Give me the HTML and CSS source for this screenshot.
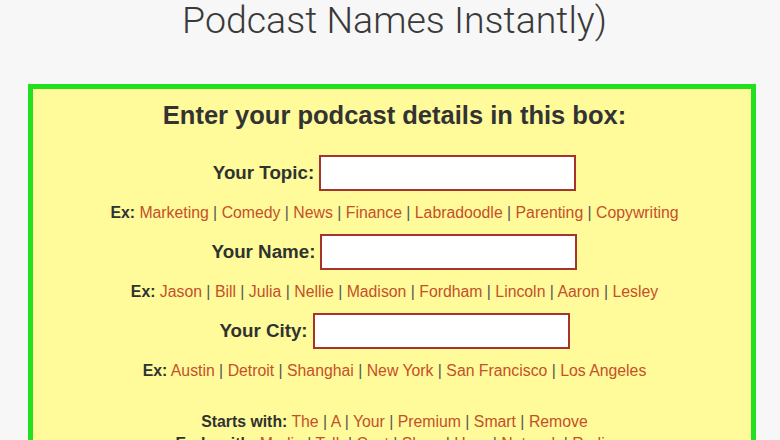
FILE: index.html
```html
<!DOCTYPE html>
<html lang="en">
<head>
  <meta charset="UTF-8">
  <meta name="viewport" content="width=device-width, initial-scale=1.0">
  <title>Podcast Name Generator</title>
  <link rel="stylesheet" href="styles.css">
</head>
<body>
  <h1 class="title">Podcast Names Instantly)</h1>

  <div class="box">
    <h2 class="box-heading">Enter your podcast details in this box:</h2>

    <div class="field">
      <label for="topic">Your Topic:</label>
      <input type="text" id="topic" class="input-field">
    </div>
    <p class="examples"><b>Ex:</b> <a href="#">Marketing</a> | <a href="#">Comedy</a> | <a href="#">News</a> | <a href="#">Finance</a> | <a href="#">Labradoodle</a> | <a href="#">Parenting</a> | <a href="#">Copywriting</a></p>

    <div class="field">
      <label for="name">Your Name:</label>
      <input type="text" id="name" class="input-field">
    </div>
    <p class="examples"><b>Ex:</b> <a href="#">Jason</a> | <a href="#">Bill</a> | <a href="#">Julia</a> | <a href="#">Nellie</a> | <a href="#">Madison</a> | <a href="#">Fordham</a> | <a href="#">Lincoln</a> | <a href="#">Aaron</a> | <a href="#">Lesley</a></p>

    <div class="field">
      <label for="city">Your City:</label>
      <input type="text" id="city" class="input-field">
    </div>
    <p class="examples"><b>Ex:</b> <a href="#">Austin</a> | <a href="#">Detroit</a> | <a href="#">Shanghai</a> | <a href="#">New York</a> | <a href="#">San Francisco</a> | <a href="#">Los Angeles</a></p>

    <div class="options">
      <p class="examples"><b>Starts with:</b> <a href="#">The</a> | <a href="#">A</a> | <a href="#">Your</a> | <a href="#">Premium</a> | <a href="#">Smart</a> | <a href="#">Remove</a></p>
      <p class="examples"><b>Ends with:</b> <a href="#">Media</a> | <a href="#">Talk</a> | <a href="#">Cast</a> | <a href="#">Show</a> | <a href="#">Hour</a> | <a href="#">Network</a> | <a href="#">Radio</a></p>
    </div>
  </div>
</body>
</html>
```

FILE: styles.css
```css
body {
  margin: 0;
  background-color: #f7f7f7;
  font-family: "Liberation Sans", Arial, sans-serif;
  color: #333;
}

.title {
  margin: -2px 0 0;
  padding-left: 9px;
  font-family: Roboto, "Liberation Sans", sans-serif;
  font-weight: 300;
  font-size: 37.5px;
  line-height: 44px;
  text-align: center;
  color: #3a3a3a;
}

.box {
  margin: 42px 24px 0 28px;
  padding: 11px 0 40px 5px;
  border: 5px solid #20e020;
  background-color: #fffa9a;
  text-align: center;
}

.box-heading {
  margin: 0;
  font-size: 25.5px;
  line-height: 30px;
  font-weight: bold;
  color: #333;
}

.field {
  display: flex;
  justify-content: center;
  align-items: center;
  gap: 5px;
  margin-top: 11px;
}

.box-heading + .field {
  margin-top: 25px;
}

.field label {
  font-size: 18.75px;
  font-weight: bold;
  color: #2f3330;
}

.input-field {
  box-sizing: border-box;
  width: 257px;
  height: 36px;
  margin: 0;
  border: 2px solid #a8332a;
  background-color: #fff;
}

.examples {
  margin: 12px 0 0;
  font-size: 15.8px;
  line-height: 20px;
  color: #555;
}

.examples b {
  color: #2f3330;
}

.examples a {
  color: #c4502a;
  text-decoration: none;
}

.options {
  margin-top: 30px;
}

.options .examples {
  margin-top: 0;
  line-height: 22px;
}
```
